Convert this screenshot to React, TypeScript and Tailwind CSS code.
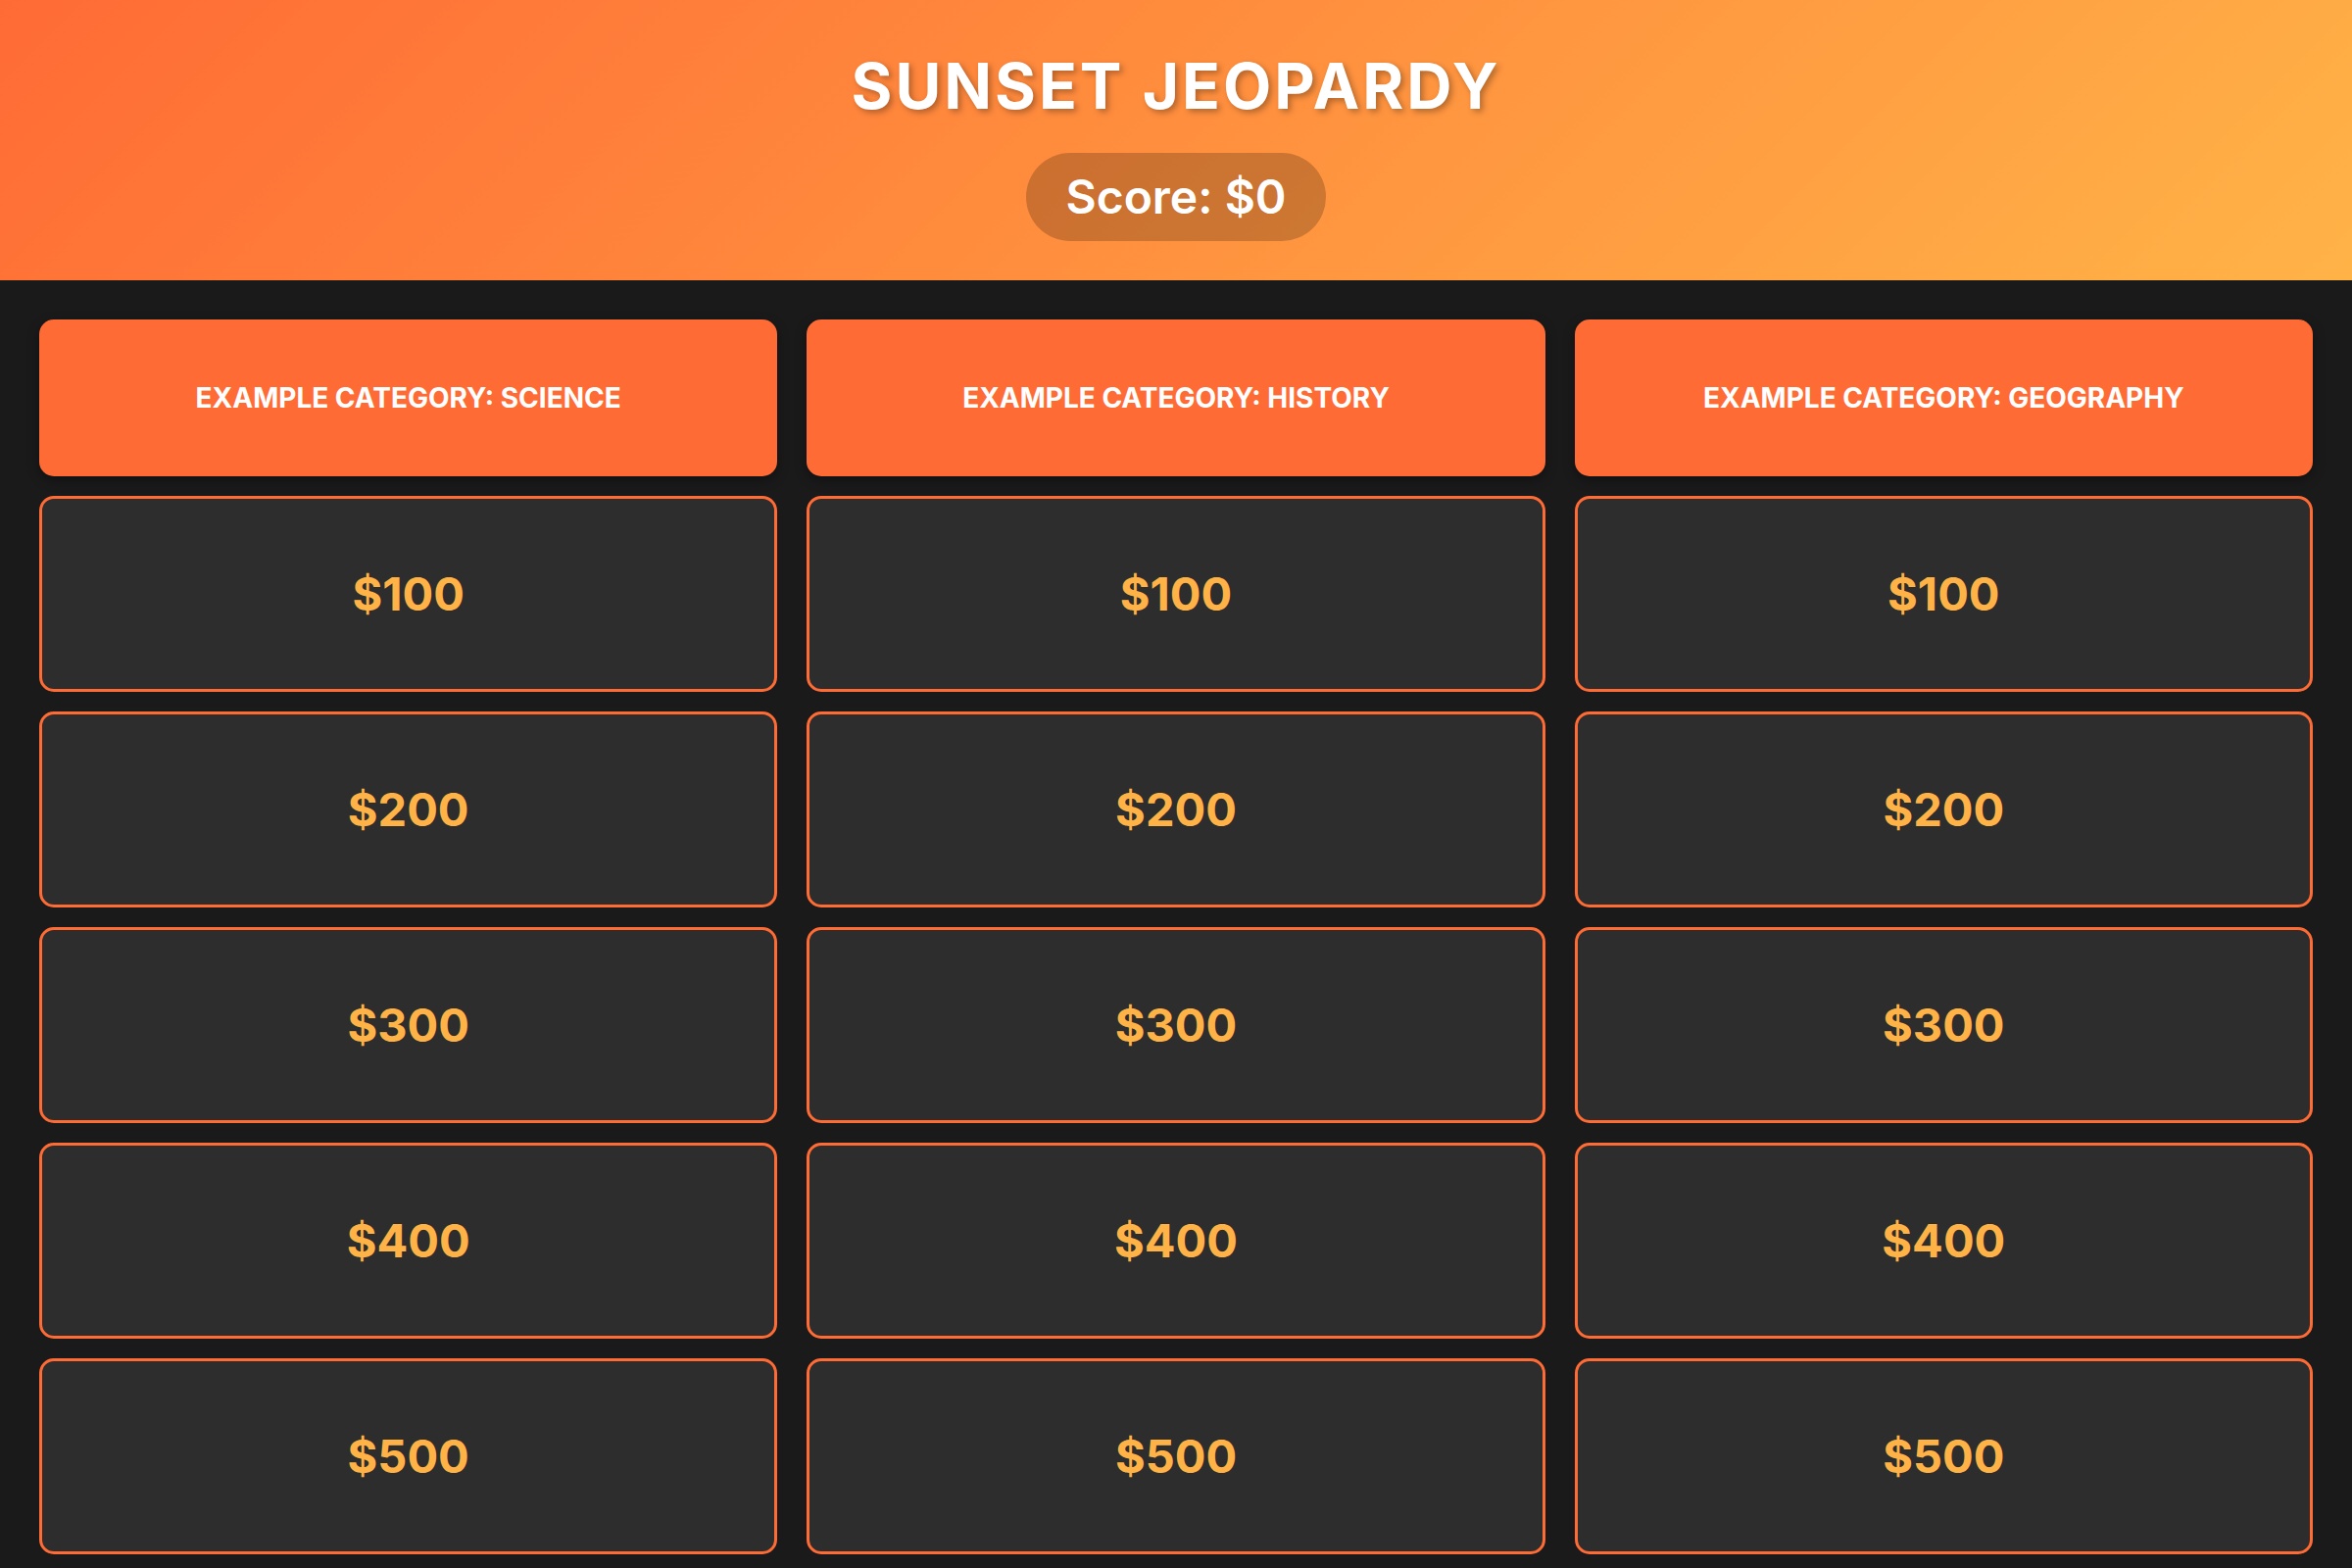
import React, { useState } from 'react';

const categories = [
  'Example Category: Science',
  'Example Category: History',
  'Example Category: Geography',
];

const values = [100, 200, 300, 400, 500];

export default function App() {
  const [score] = useState(0);
  const [used, setUsed] = useState<{ [key: string]: boolean }>({});

  return (
    <div className="min-h-screen bg-[#1a1a1a] font-['Inter','Liberation_Sans',sans-serif]">
      <header className="flex flex-col items-center bg-[linear-gradient(135deg,#ff6b35,#ffb347)] pt-[40px] pb-[40px]">
        <h1 className="text-[64px] leading-[96px] font-bold uppercase tracking-[3px] text-white [text-shadow:3px_3px_6px_rgba(0,0,0,0.3)]">
          Sunset Jeopardy
        </h1>
        <div className="mt-[20px] flex h-[90px] items-center rounded-full bg-black/20 px-[40px] text-[48px] font-semibold text-white">
          Score: ${score}
        </div>
      </header>

      <main className="grid grid-cols-3 gap-x-[30px] p-[40px]">
        {categories.map(cat => (
          <div key={cat} className="flex flex-col gap-[20px]">
            <div className="flex h-[160px] items-center justify-center rounded-[15px] bg-[#ff6b35] text-[28px] font-bold uppercase text-white shadow-[0_4px_12px_rgba(0,0,0,0.35)]">
              {cat}
            </div>
            {values.map(v => {
              const key = `${cat}-${v}`;
              return (
                <button
                  key={key}
                  onClick={() => setUsed({ ...used, [key]: true })}
                  className="flex h-[200px] items-center justify-center rounded-[15px] border-[3px] border-[#ff6b35] bg-[#2d2d2d] text-[47px] font-bold text-[#ffb347]"
                >
                  {used[key] ? '' : `$${v}`}
                </button>
              );
            })}
          </div>
        ))}
      </main>
    </div>
  );
}
